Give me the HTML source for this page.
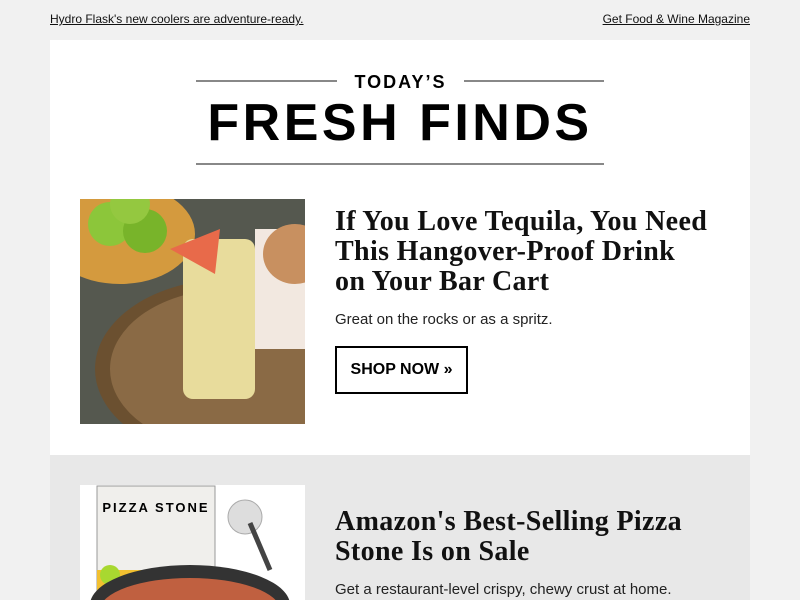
<!DOCTYPE html>
<html style="overflow:hidden"><head><style>
body{margin:0;background:#f1f1f1;font-family:"Liberation Sans",sans-serif;width:800px;height:600px;overflow:hidden;position:relative}
.top{position:absolute;top:12px;font-size:12px;text-decoration:underline;color:#111}
.card{position:absolute;left:50px;top:40px;width:700px;height:415px;background:#fff}
.card2{position:absolute;left:50px;top:455px;width:700px;height:145px;background:#e8e8e8}
.line{position:absolute;height:2px;background:#888}
h1{position:absolute;margin:0;font-family:"Liberation Serif",serif;font-weight:bold;font-size:28px;line-height:30px;color:#111;letter-spacing:0.35px;white-space:nowrap}
.p{position:absolute;font-size:15px;color:#222;white-space:nowrap}
.btn{position:absolute;left:335px;top:346px;height:44px;border:2px solid #000;font-weight:bold;font-size:16px;line-height:44px;text-align:center;width:129px}
</style></head><body>
<div class="top" style="left:50px">Hydro Flask's new coolers are adventure-ready.</div>
<div class="top" style="right:50px">Get Food &amp; Wine Magazine</div>
<div class="card"></div>
<div class="line" style="left:196px;top:80px;width:141px"></div>
<div class="line" style="left:464px;top:80px;width:140px"></div>
<div style="position:absolute;left:343px;top:72px;width:115px;text-align:center;font-weight:bold;font-size:18px;letter-spacing:2px">TODAY’S</div>
<div style="position:absolute;left:150px;top:93px;width:500px;text-align:center;font-weight:bold;font-size:52px;line-height:60px;letter-spacing:3.5px">FRESH FINDS</div>
<div class="line" style="left:196px;top:163px;width:408px"></div>
<svg style="position:absolute;left:80px;top:199px" width="225" height="225">
<rect width="225" height="225" fill="#55584f"/>
<ellipse cx="40" cy="35" rx="75" ry="50" fill="#d49a3e"/>
<circle cx="30" cy="25" r="22" fill="#8cc63a"/><circle cx="65" cy="32" r="22" fill="#78b42a"/><circle cx="50" cy="5" r="20" fill="#94c840"/>
<ellipse cx="150" cy="170" rx="135" ry="90" fill="#6b5030"/>
<ellipse cx="150" cy="170" rx="120" ry="80" fill="#8a6a45"/>
<rect x="175" y="30" width="50" height="120" fill="#f2e8e0"/>
<ellipse cx="215" cy="55" rx="32" ry="30" fill="#c89060"/>
<rect x="103" y="40" width="72" height="160" rx="10" fill="#e8dc9c"/>
<path d="M90 50 L140 30 L135 75 Z" fill="#e86a4a"/>
</svg>
<h1 style="left:335px;top:207px">If You Love Tequila, You Need<br>This Hangover-Proof Drink<br>on Your Bar Cart</h1>
<div class="p" style="left:335px;top:311px">Great on the rocks or as a spritz.</div>
<div class="btn">SHOP NOW »</div>
<div class="card2"></div>
<svg style="position:absolute;left:80px;top:485px" width="225" height="115">
<rect width="225" height="115" fill="#fff"/>
<rect x="17" y="1" width="118" height="114" fill="#f0efec" stroke="#999"/>
<text x="76" y="27" font-family="Liberation Sans" font-weight="bold" font-size="13" text-anchor="middle" letter-spacing="2">PIZZA STONE</text>
<rect x="17" y="85" width="118" height="30" fill="#f2c030"/>
<circle cx="30" cy="90" r="10" fill="#a8d830"/>
<ellipse cx="110" cy="120" rx="100" ry="40" fill="#333"/>
<ellipse cx="110" cy="125" rx="90" ry="32" fill="#c06040"/>
<circle cx="165" cy="32" r="17" fill="#ddd" stroke="#aaa"/>
<path d="M170 38 L190 85" stroke="#444" stroke-width="5"/>
</svg>
<h1 style="left:335px;top:507px">Amazon's Best-Selling Pizza<br>Stone Is on Sale</h1>
<div class="p" style="left:335px;top:581px">Get a restaurant-level crispy, chewy crust at home.</div>
</body></html>
